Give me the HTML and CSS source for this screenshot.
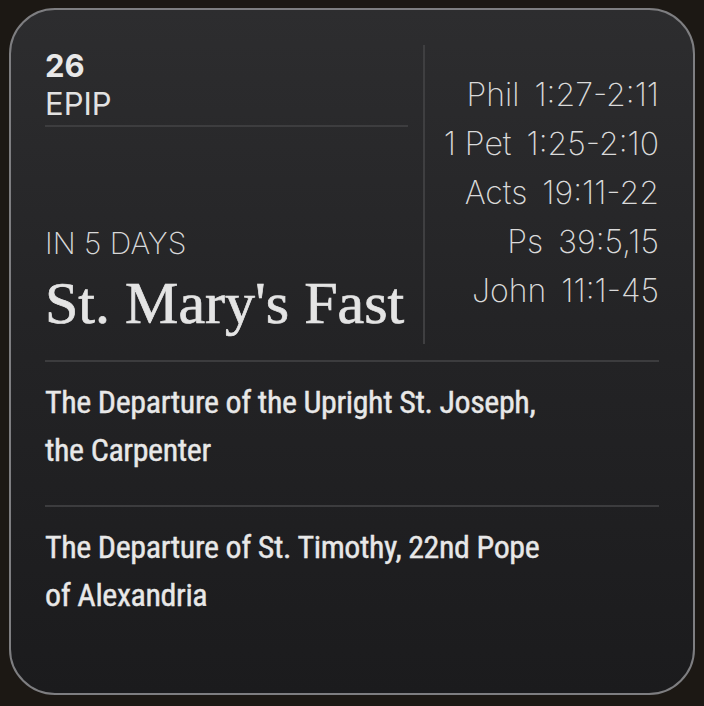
FILE: index.html
```html
<!DOCTYPE html>
<html lang="en">
<head>
<meta charset="utf-8">
<title>Coptic calendar widget</title>
<link rel="stylesheet" href="styles.css">
</head>
<body>
<div class="widget">
  <section class="top">
    <div class="left">
      <div class="date">
        <div class="day">26</div>
        <div class="month">EPIP</div>
      </div>
      <div class="upcoming">
        <div class="countdown">IN 5 DAYS</div>
        <div class="event">St. Mary's Fast</div>
      </div>
    </div>
    <div class="divider"></div>
    <ul class="readings">
      <li><span class="book">Phil</span><span class="ref">1:27-2:11</span></li>
      <li><span class="book">1 Pet</span><span class="ref">1:25-2:10</span></li>
      <li><span class="book">Acts</span><span class="ref">19:11-22</span></li>
      <li><span class="book">Ps</span><span class="ref">39:5,15</span></li>
      <li><span class="book">John</span><span class="ref">11:1-45</span></li>
    </ul>
  </section>
  <ul class="feasts">
    <li class="feast"><p>The Departure of the Upright St. Joseph, the Carpenter</p></li>
    <li class="feast"><p>The Departure of St. Timothy, 22nd Pope of Alexandria</p></li>
  </ul>
</div>
</body>
</html>
```

FILE: styles.css
```css
html, body {
  margin: 0;
  padding: 0;
}

body {
  background: #1c1814;
  width: 704px;
  height: 706px;
  overflow: hidden;
}

.widget {
  margin: 8px 0 0 9px;
  width: 686px;
  height: 687px;
  box-sizing: border-box;
  border: 2px solid #7e7e81;
  border-radius: 46px;
  background: linear-gradient(180deg, #2d2d2f 0%, #242426 45%, #1b1b1d 100%);
  padding: 35px 34px 0 34px;
  font-family: Inter, "Noto Sans", sans-serif;
  color: #e6e6e6;
}

.top {
  display: flex;
  height: 299px;
  margin-bottom: 16px;
}

.left {
  width: 363px;
  display: flex;
  flex-direction: column;
  justify-content: space-between;
}

.date {
  border-bottom: 2px solid #3d3d3f;
  padding-bottom: 3px;
}

.day {
  font-size: 31px;
  line-height: 36px;
  font-weight: 700;
  color: #e8e8e8;
  margin-top: 3px;
}

.month {
  font-size: 31px;
  line-height: 36px;
  font-weight: 400;
  margin-top: 2px;
  color: #e2e2e2;
}

.upcoming {
  padding-bottom: 11px;
}

.countdown {
  font-size: 30px;
  line-height: 36px;
  font-weight: 200;
  color: #d8d8d8;
}

.event {
  margin-top: 12px;
  font-family: "Liberation Serif", serif;
  font-size: 60px;
  line-height: 60px;
  color: #e4e4e4;
  -webkit-text-stroke: 0.7px #e4e4e4;
}

.divider {
  width: 2px;
  background: #3f3f41;
  margin-left: 15px;
}

.readings {
  flex: 1;
  list-style: none;
  margin: 0;
  padding: 0 0 4px;
  display: flex;
  flex-direction: column;
  justify-content: center;
  align-items: flex-end;
}

.readings li {
  display: flex;
  gap: 15px;
  font-size: 32px;
  line-height: 49px;
  font-weight: 200;
  color: #dadada;
}

.feasts {
  list-style: none;
  margin: 0;
  padding: 0;
}

.feast {
  border-top: 2px solid #3c3c3e;
  padding: 16px 0 31px;
}

.feast p {
  margin: 0;
  max-width: 510px;
  font-family: "Liberation Sans Narrow", "Roboto Condensed", Roboto, sans-serif;
  font-size: 32px;
  line-height: 48px;
  letter-spacing: -0.4px;
  color: #e8e8e8;
  -webkit-text-stroke: 0.4px #e8e8e8;
}
```
